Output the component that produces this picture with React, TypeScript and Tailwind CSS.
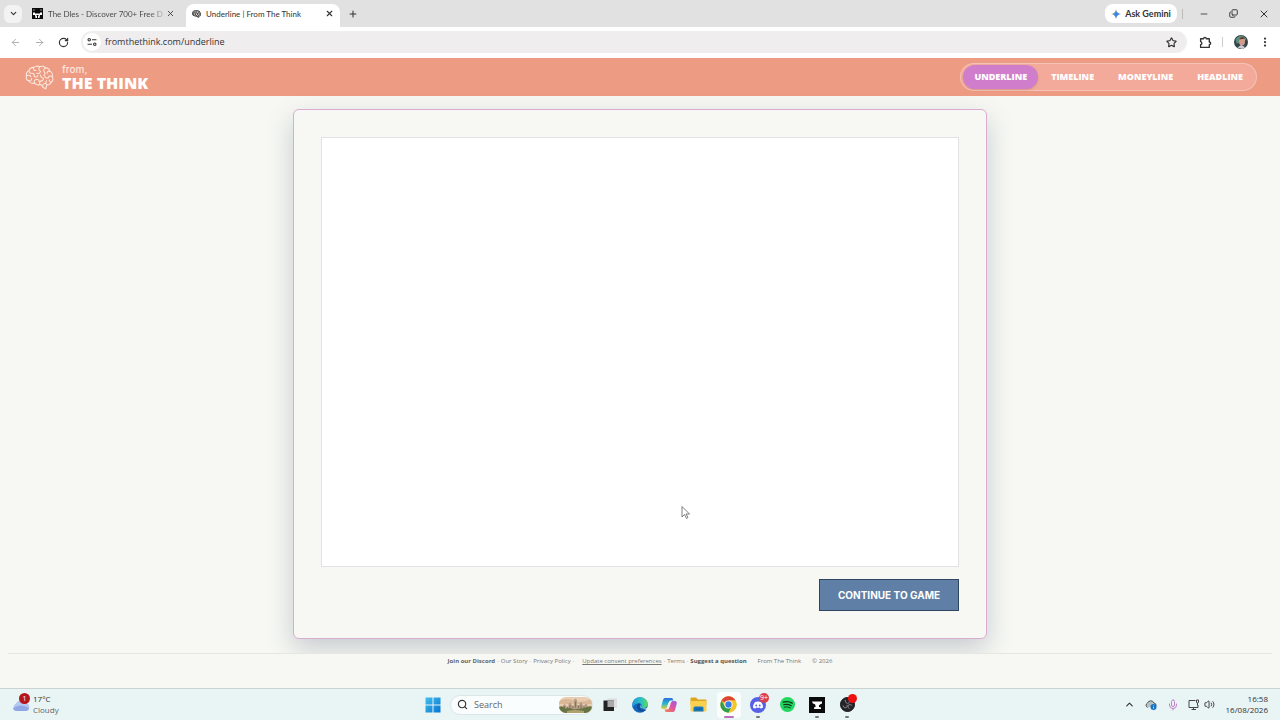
import type { ReactNode } from "react";
import {
  ArrowLeft,
  ArrowRight,
  ChevronDown,
  ChevronUp,
  Copy,
  EllipsisVertical,
  Mic,
  Minus,
  Plus,
  RotateCw,
  Search,
  Star,
  Volume2,
  X,
} from "lucide-react";

const navItems = ["UNDERLINE", "TIMELINE", "MONEYLINE", "HEADLINE"];

function BrainIcon({ className, strokeWidth = 1.1 }: { className?: string; strokeWidth?: number }) {
  return (
    <svg
      viewBox="0 0 30 26"
      className={className}
      fill="none"
      stroke="currentColor"
      strokeWidth={strokeWidth}
      strokeLinecap="round"
      strokeLinejoin="round"
    >
      <path d="M4 16.5C1.5 16 .6 13.500 1.500 11.500C.6 9 2 6.500 4 6C4.500 3.500 7 2 9 2.600C10.500 .8 13.500 .8 15 2.200C17 .8 20 1.200 21.200 3C23.500 2.800 25.500 4.500 25.700 6.500C28 7.500 29 10 28.200 12C29.600 14 29 17 27 18C26.500 20 24.500 21 22.700 20.500L21.500 24.800L18.800 23.500C18.500 21.500 17 20.500 15.500 20.200C13.500 21 11 20.500 10 18.800C7.500 19.500 5 18.500 4 16.500Z" />
      <path d="M4 6C4 8 5.500 9 7.200 8.500M9 2.600C8.200 4.600 9.500 6 11.200 5.600M1.500 11.500C3 10 5.500 10.500 6 12.200M4 16.500C5.500 16.800 7 15.500 6.800 14M10 18.800C9 17.200 9.500 15.500 11.200 15M7.200 8.500C9 8.500 10 10 9.500 11.800C11 13 13 12.500 13.400 10.800M15 2.200C13.800 3.800 14.200 5.800 16 6.500C15.800 8.500 14 9.300 12.300 8.500M21.200 3C19.500 3.500 18.800 5.500 19.800 7C21.300 8 21 10 19.500 10.700M25.700 6.500C24 6 22.800 7 23 8.600M28.200 12C26.500 10.800 24.300 11.500 24 13.400C22.400 14 20.700 13.200 20.500 11.600M27 18C25.800 17.800 25 16.800 25.300 15.500M22.700 20.500C21.300 19.500 21.200 17.500 22.400 16.500M15.500 20.200C14.500 18.500 15.400 16.500 17.200 16.500C18.800 16.300 19.400 14.800 18.800 13.500M11.200 15C13 14.500 14.500 15.500 14.600 16.800M16.200 10.500C16 12 16.800 13.300 18.800 13.500M18.300 21C19 19.500 20.200 19.200 21.300 19.300" />
    </svg>
  );
}

function DlesIcon() {
  return (
    <svg viewBox="0 0 22 22" className="size-[11px] shrink-0">
      <rect width="22" height="22" fill="#0b0b0b" />
      <path d="M3 2l3 2-3 2zM19 2l-3 2 3 2z" fill="#bbb" />
      <path d="M2 9h4v2h10V9h4v5h-4l-1 6H7l-1-6H2z" fill="#fff" />
      <path d="M9 14h4v2h-1v4h-2v-4H9z" fill="#0b0b0b" />
    </svg>
  );
}

function TuneIcon() {
  return (
    <svg viewBox="0 0 18 18" className="size-[10px]" fill="none" stroke="#333" strokeWidth="2">
      <circle cx="4" cy="5" r="2.200" />
      <path d="M9 5h8M1 13h8" />
      <circle cx="14" cy="13" r="2.200" />
    </svg>
  );
}

function ExtensionIcon() {
  return (
    <svg viewBox="0 0 24 24" className="size-[13px]" fill="none" stroke="currentColor" strokeWidth="2.500" strokeLinejoin="round">
      <path d="M3 5h5.500a2.500 2.500 0 0 1 5 0H19v6a2.500 2.500 0 0 1 0 5v5H3v-5a2.800 2.800 0 0 0 0-5.500z" />
    </svg>
  );
}

function TabStrip() {
  return (
    <div className="flex h-[27px] items-center bg-[#e1e1e1] pl-1 font-[Lato,sans-serif] text-[#333]">
      <button type="button" aria-label="Search tabs" className="flex size-[18px] items-center justify-center rounded-md bg-[#f3f3f3]">
        <ChevronDown className="size-[9px]" strokeWidth={3} />
      </button>
      <div className="ml-[10px] flex w-[154px] items-center text-[8px] text-[#444]">
        <DlesIcon />
        <span className="ml-[5px] flex-1 bg-linear-to-r from-[#444] from-85% to-[#ccc] bg-clip-text whitespace-nowrap text-transparent">
          The Dles - Discover 700+ Free D
        </span>
        <button type="button" aria-label="Close The Dles tab" className="mr-[11px]">
          <X className="size-[9px]" strokeWidth={2.500} />
        </button>
      </div>
      <div className="flex w-[154px] items-center self-stretch pt-1 text-[8px]">
        <div className="flex w-full items-center self-stretch rounded-t-lg bg-white px-[6px] pb-[4px]">
          <BrainIcon className="h-2 w-[9px] text-[#333]" strokeWidth={3} />
          <span className="ml-[5px] flex-1 whitespace-nowrap">Underline | From The Think</span>
          <button type="button" aria-label="Close Underline tab">
            <X className="size-[9px]" strokeWidth={3} />
          </button>
        </div>
      </div>
      <button type="button" aria-label="New tab" className="ml-2">
        <Plus className="size-[10px]" strokeWidth={2.500} />
      </button>
      <div className="ml-auto flex items-center">
        <button type="button" className="flex h-[19px] w-[72px] items-center justify-center gap-1 rounded-lg bg-white font-bold">
          <svg viewBox="0 0 20 20" className="size-[10px]">
            <defs>
              <linearGradient id="gemini" x1="0" y1="0" x2="1" y2="1">
                <stop offset="0.250" stopColor="#e8b33c" />
                <stop offset="0.450" stopColor="#3b86e8" />
                <stop offset="0.900" stopColor="#3a7be0" />
              </linearGradient>
            </defs>
            <path d="M10 0C11 6 14 9 20 10C14 11 11 14 10 20C9 14 6 11 0 10C6 9 9 6 10 0Z" fill="url(#gemini)" />
          </svg>
          <span>Ask Gemini</span>
        </button>
        <span className="ml-[5px] h-[10px] w-px bg-[#bbb]" />
        <button type="button" aria-label="Minimize" className="ml-4">
          <Minus className="size-[10px]" />
        </button>
        <button type="button" aria-label="Restore" className="ml-5">
          <Copy className="size-[9px] -scale-y-100" strokeWidth={2.500} />
        </button>
        <button type="button" aria-label="Close window" className="mr-[10px] ml-5">
          <X className="size-[12px]" />
        </button>
      </div>
    </div>
  );
}

function Toolbar() {
  return (
    <div className="flex h-[31px] items-center bg-white pr-[9px] pb-px pl-[10px] text-[#333]">
      <button type="button" aria-label="Back" className="text-[#aaa]">
        <ArrowLeft className="size-[11px]" />
      </button>
      <button type="button" aria-label="Forward" className="ml-[13px] text-[#aaa]">
        <ArrowRight className="size-[11px]" />
      </button>
      <button type="button" aria-label="Reload" className="ml-[13px]">
        <RotateCw className="size-[11px]" strokeWidth={2.500} />
      </button>
      <div className="ml-3 flex h-[22px] flex-1 items-center rounded-full bg-[#efedee] pr-[10px] pl-[2px]">
        <button type="button" aria-label="Site information" className="flex size-[18px] items-center justify-center rounded-full bg-white">
          <TuneIcon />
        </button>
        <input
          aria-label="Address"
          defaultValue="fromthethink.com/underline"
          className="ml-1 flex-1 bg-transparent text-[9px] text-[#333] outline-none"
        />
        <button type="button" aria-label="Bookmark this page">
          <Star className="size-[11px]" strokeWidth={2.500} />
        </button>
      </div>
      <button type="button" aria-label="Extensions" className="ml-3">
        <ExtensionIcon />
      </button>
      <span className="ml-[10px] h-[10px] w-px bg-[#ccc]" />
      <button type="button" aria-label="Profile" className="ml-[11px]">
        <svg viewBox="0 0 28 28" className="size-[14px]">
          <circle cx="14" cy="14" r="14" fill="#33434a" />
          <path d="M3 8Q14-6 25 8L19 15 5 17z" fill="#5e8a7c" />
          <ellipse cx="16" cy="13" rx="6" ry="8" fill="#d59a88" />
          <path d="M7 25L14 20l8 4-5 4z" fill="#c8ccd0" />
          <path d="M10 9Q15 0 22 7L17 8z" fill="#573832" />
        </svg>
      </button>
      <button type="button" aria-label="Menu" className="ml-[11px]">
        <EllipsisVertical className="size-[12px]" strokeWidth={2.500} />
      </button>
    </div>
  );
}

function SiteHeader() {
  return (
    <header className="flex h-[38px] items-center justify-between bg-[#ed9b82] pr-[23px] pl-[25px] text-white">
      <a href="#home" className="flex items-center gap-2">
        <BrainIcon className="h-[25px] w-[29px] text-[#fce9df]" />
        <span className="flex flex-col">
          <span className="font-[Inter,sans-serif] text-[10px] leading-[12px] font-medium text-[#fde6dc]">from,</span>
          <span className="text-[16px] leading-[16px] font-extrabold">THE THINK</span>
        </span>
      </a>
      <nav className="flex h-7 items-center gap-[2px] rounded-full border border-white/30 bg-[#f3aa9a] px-[2px]">
        {navItems.map((item, i) => (
          <a
            key={item}
            href={`#${item.toLowerCase()}`}
            className={`flex h-6 items-center rounded-full px-[11px] text-[9px] font-extrabold ${
              i === 0 ? "bg-[#d07ecb] shadow-sm" : ""
            }`}
          >
            {item}
          </a>
        ))}
      </nav>
    </header>
  );
}

function GameCard() {
  return (
    <main className="flex flex-1 px-4 pt-[13px] pb-[14px]">
      <div className="mx-auto flex w-full max-w-[694px] flex-col rounded-md border border-[#dbacd2] bg-[#f7f8f3] p-[27px] shadow-[0_10px_26px_rgba(70,85,110,0.27)]">
        <div className="min-h-[200px] flex-1 border border-[#e2e2e4] bg-white" />
        <button
          type="button"
          className="mt-3 h-8 w-[140px] self-end border border-[#2f4560] bg-[#5f7fa6] font-[Inter,sans-serif] text-[10px] font-bold text-white"
        >
          CONTINUE TO GAME
        </button>
      </div>
    </main>
  );
}

function SiteFooter() {
  return (
    <footer className="bg-[#f7f8f3] px-2">
      <div className="flex h-[35px] items-start justify-center border-t border-[#e6e7e3] pt-[2px] text-[6px] leading-[10px] whitespace-nowrap text-[#777]">
        <a href="#discord" className="font-bold text-[#666]">Join our Discord</a>
        <span className="px-[2px]">·</span>
        <a href="#story">Our Story</a>
        <span className="px-[2px]">·</span>
        <a href="#privacy">Privacy Policy</a>
        <span className="pr-2 pl-[2px]">·</span>
        <button type="button" className="underline">Update consent preferences</button>
        <span className="px-[2px]">·</span>
        <a href="#terms">Terms</a>
        <span className="px-[2px]">·</span>
        <a href="#suggest" className="font-bold text-[#555]">Suggest a question</a>
        <span className="ml-[11px]">From The Think</span>
        <span className="ml-[11px]">© 2026</span>
      </div>
    </footer>
  );
}

function TaskButton({ label, running, active, children }: { label: string; running?: boolean; active?: boolean; children: ReactNode }) {
  return (
    <button
      type="button"
      aria-label={label}
      className={`relative flex h-[26px] w-6 items-center justify-center rounded-sm ${active ? "bg-white/80" : ""}`}
    >
      {children}
      {running && (
        <span className={`absolute bottom-0 h-[2px] rounded-full ${active ? "w-[10px] bg-[#c06fbd]" : "w-[4px] bg-[#777]"}`} />
      )}
    </button>
  );
}

function TaskbarApps() {
  return (
    <div className="flex w-[261px] justify-between">
      <TaskButton label="Task view">
        <svg viewBox="0 0 28 28" className="size-[14px]">
          <rect x="9" y="1" width="19" height="19" fill="#dedede" />
          <rect x="1" y="5" width="21" height="21" fill="#222" />
          <rect x="9" y="5" width="13" height="13" fill="#aaa" />
        </svg>
      </TaskButton>
      <TaskButton label="Edge">
        <svg viewBox="0 0 32 32" className="size-4">
          <defs>
            <linearGradient id="edgeTop" x1="0" x2="1">
              <stop offset="0" stopColor="#2297dc" />
              <stop offset="0.600" stopColor="#2ac4bf" />
              <stop offset="1" stopColor="#66d951" />
            </linearGradient>
          </defs>
          <circle cx="16" cy="16" r="15.500" fill="#1466b8" />
          <path d="M.6 15C1.500 6 8 .5 16 .5c9 0 15.500 6 15.500 13 0 6-4 9-9 9-4 0-5-1.500-4-3 2-3 0-7-5-7S3 16 .6 22z" fill="url(#edgeTop)" />
          <path d="M13 13c-5 4-4 13 4 15.500 5 1.500 10-1 12-4-7 3-14 0-14-5 0-3 1-4 2-5q-2-2-4-1.500z" fill="#0e4c9b" />
          <path d="M18 16c-2 2-2 5 2 7 4 1.500 8 0 12-2v3c-3 1.500-9 1-12-1-2-1.500-3-4-2-7z" fill="#e9f4f5" />
        </svg>
      </TaskButton>
      <TaskButton label="Copilot">
        <svg viewBox="0 0 32 32" className="size-4">
          <defs>
            <linearGradient id="copA" x1="0" y1="0" x2="0" y2="1">
              <stop offset="0" stopColor="#2a6fe0" />
              <stop offset="0.500" stopColor="#28b5cf" />
              <stop offset="1" stopColor="#e7cf36" />
            </linearGradient>
            <linearGradient id="copB" x1="1" y1="0" x2="0" y2="1">
              <stop offset="0" stopColor="#9a5be8" />
              <stop offset="0.500" stopColor="#e2569c" />
              <stop offset="1" stopColor="#f28b45" />
            </linearGradient>
          </defs>
          <path d="M9 2h12c3 0 3 3 4 5h-5c-3 0-4 2-5 5l-3 9c-1 2-2 3-4 3H4c-4 0-4-4-3-7l3-11c1-3 2-4 5-4z" fill="url(#copA)" />
          <path d="M23 30H11c-3 0-3-3-4-5h5c3 0 4-2 5-5l3-9c1-2 2-3 4-3h4c4 0 4 4 3 7l-3 11c-1 3-2 4-5 4z" fill="url(#copB)" />
          <path d="M14.500 12H18l-2.500 9H12z" fill="#e9f4f5" />
        </svg>
      </TaskButton>
      <TaskButton label="File Explorer">
        <svg viewBox="0 0 34 30" className="h-[15px] w-[17px]">
          <path d="M1 3q0-2 2-2h9l4 4h15q2 0 2 2v8H1z" fill="#dfa51f" />
          <rect x="1" y="8" width="32" height="21" rx="2" fill="#fad04f" />
          <path d="M7 29v-7q0-3 3-3h14q3 0 3 3v7z" fill="#1878bd" />
          <path d="M11 24h12" stroke="#0d5a98" strokeWidth="2" />
        </svg>
      </TaskButton>
      <TaskButton label="Chrome" running active>
        <svg viewBox="0 0 48 48" className="size-[17px]">
          <circle cx="24" cy="24" r="23" fill="#f6c52c" />
          <path d="M24 24L4.100 12.500A23 23 0 0 1 43.900 12.500H24z" fill="#dd4437" />
          <path d="M4.100 12.500A23 23 0 0 0 24 47L34 29.800 24 24 14 29.800z" fill="#2f9e4f" />
          <path d="M24 13h19.900A23 23 0 0 1 24 47l10-17.200z" fill="#f6c52c" />
          <circle cx="24" cy="24" r="11.500" fill="#fff" />
          <circle cx="24" cy="24" r="9" fill="#3b7de8" />
        </svg>
      </TaskButton>
      <TaskButton label="Discord" running>
        <svg viewBox="0 0 32 32" className="size-4">
          <circle cx="16" cy="16" r="16" fill="#5661e8" />
          <path d="M10 10q6-2 12 0 4 5 4 11-2 2-5 2l-1-2q-4 1-8 0l-1 2q-3 0-5-2 0-6 4-11z" fill="#fff" />
          <circle cx="12.500" cy="17" r="2" fill="#5661e8" />
          <circle cx="19.500" cy="17" r="2" fill="#5661e8" />
        </svg>
        <span className="absolute top-px right-px flex size-[10px] items-center justify-center rounded-full bg-[#d8404c] text-[7px] leading-none text-white">
          9+
        </span>
      </TaskButton>
      <TaskButton label="Spotify">
        <svg viewBox="0 0 32 32" className="size-[15px]" fill="none" stroke="#103018" strokeLinecap="round">
          <circle cx="16" cy="16" r="16" fill="#22d760" stroke="none" />
          <path d="M7 11q10-3 19 2" strokeWidth="3" />
          <path d="M8 16.500q8-2 16 2" strokeWidth="2.500" />
          <path d="M9 21.500q7-2 13 1.500" strokeWidth="2" />
        </svg>
      </TaskButton>
      <TaskButton label="Anvil" running>
        <svg viewBox="0 0 32 32" className="size-4">
          <rect width="32" height="32" fill="#0b0b0b" />
          <path d="M6 9h20v4q-4 1-6 4v3l4 1v3H10v-3l3-1v-3q0-2-2-3-4 0-5-5z" fill="#fff" />
        </svg>
      </TaskButton>
      <TaskButton label="OBS" running>
        <svg viewBox="0 0 32 32" className="size-[15px]">
          <circle cx="16" cy="16" r="15" fill="#24242a" stroke="#111" strokeWidth="2" />
          <path d="M11 6q-1 6 5 8 4-1 5-6M26 18q-5-4-9 0-1 4 3 7M6 18q2 6 7 5 4-3 2-6" fill="none" stroke="#85858c" strokeWidth="2" />
        </svg>
        <span className="absolute top-[2px] right-[2px] size-[9px] rounded-full bg-[#ee1010]" />
      </TaskButton>
    </div>
  );
}

function Taskbar() {
  return (
    <div className="flex h-8 items-center border-t border-[#c9d3d2] bg-[#e9f4f5] px-3 text-[#333]">
      <div className="flex flex-1 items-center">
        <button type="button" className="flex items-center gap-[3px] text-left text-[8px] leading-[11px]">
          <span className="relative">
            <svg viewBox="0 0 36 32" className="h-4 w-[18px]">
              <path d="M9 28a8 8 0 0 1-1-15 10 10 0 0 1 18-1 8 8 0 0 1 1 16z" fill="#b4c8f2" />
              <path d="M2 22q16-10 32 0-1 6-7 6H9q-6 0-7-6z" fill="#8fa7e3" />
            </svg>
            <span className="absolute -top-[4px] right-0 flex size-[11px] items-center justify-center rounded-full bg-[#b5161c] text-[7px] leading-none text-white">
              1
            </span>
          </span>
          <span className="flex flex-col pb-px">
            <span>17°C</span>
            <span className="text-[#666]">Cloudy</span>
          </span>
        </button>
      </div>
      <div className="flex items-center gap-[5px]">
        <TaskButton label="Start">
          <svg viewBox="0 0 32 32" className="size-4">
            <defs>
              <linearGradient id="win" x1="0" y1="0" x2="1" y2="1">
                <stop offset="0" stopColor="#42c0ee" />
                <stop offset="1" stopColor="#0874cf" />
              </linearGradient>
            </defs>
            <path d="M1 1h14v14H1zM17 1h14v14H17zM1 17h14v14H1zM17 17h14v14H17z" fill="url(#win)" />
          </svg>
        </TaskButton>
        <label className="flex h-5 w-[143px] items-center rounded-full border border-[#dde6e7] bg-[#fafdfd] pl-[6px]">
          <Search className="size-[11px] shrink-0" strokeWidth={2.500} />
          <input
            aria-label="Search"
            placeholder="Search"
            className="ml-[6px] w-full min-w-0 bg-transparent text-[9px] outline-none placeholder:text-[#666]"
          />
          <svg viewBox="0 0 66 32" className="h-4 w-[33px] shrink-0">
            <defs>
              <clipPath id="castle">
                <rect width="66" height="32" rx="14" />
              </clipPath>
            </defs>
            <g clipPath="url(#castle)">
              <rect width="66" height="32" fill="#e9cdb0" />
              <path d="M0 7q16-6 30 0t36-3v10H0z" fill="#d9b797" />
              <path d="M8 26V17l3-3 3 3v2h5v-5l3-3 3 3v3h5V6l3-3 3 3v10h5v-3l3-3 3 3v4h4v-1l3-3 3 3v10z" fill="#b39b82" />
              <path d="M11 18v5M17 20v3M22 16v6M28 19v3M33 9v12M39 18v4M44 16v6M50 19v4" stroke="#75675a" strokeWidth="1.500" />
              <path d="M0 20q7-4 12 3l9-1 10 3 12-2 8-1q8-5 15-3v13H0z" fill="#667443" />
              <path d="M16 28q16-4 34 0v4H16z" fill="#b0a070" />
            </g>
          </svg>
        </label>
        <TaskbarApps />
      </div>
      <div className="flex flex-1 items-center justify-end">
        <button type="button" aria-label="Show hidden icons">
          <ChevronUp className="size-[11px]" strokeWidth={2.500} />
        </button>
        <button type="button" aria-label="OneDrive" className="ml-[10px]">
          <svg viewBox="0 0 24 20" className="h-[10px] w-3">
            <path d="M5 15a5 5 0 0 1 0-9 7 7 0 0 1 13 0 5 5 0 0 1 4 6" fill="#b7c2c6" stroke="#555" strokeWidth="2" />
            <circle cx="17" cy="14" r="6" fill="#1675c4" />
            <path d="M17 11v1M17 13.500V17" stroke="#fff" strokeWidth="1.500" />
          </svg>
        </button>
        <button type="button" aria-label="Microphone" className="ml-[10px] text-[#c183c6]">
          <Mic className="size-[12px]" />
        </button>
        <button type="button" aria-label="Network" className="ml-[9px]">
          <svg viewBox="0 0 24 24" className="size-[12px]" fill="none" stroke="#444" strokeWidth="2">
            <path d="M15 3H2v14h18v-5M7 21h9M11 17v4" />
            <path d="M17 2v4q0 2 2 2t2-2V2zM19 8v5" />
          </svg>
        </button>
        <button type="button" aria-label="Volume" className="ml-1">
          <Volume2 className="size-[11px]" />
        </button>
        <div className="ml-[11px] pb-px text-right text-[8px] leading-[11px]">
          <div>16:58</div>
          <div>16/08/2026</div>
        </div>
      </div>
    </div>
  );
}

export default function App() {
  return (
    <div className="relative flex min-h-screen flex-col bg-[#f7f8f3] font-['Open_Sans','Noto_Sans',sans-serif] text-[9px]">
      <TabStrip />
      <Toolbar />
      <SiteHeader />
      <GameCard />
      <SiteFooter />
      <Taskbar />
      {/* mouse pointer */}
      <svg viewBox="0 0 18 28" className="pointer-events-none absolute top-[506px] left-[681px] h-[14px] w-[9px]">
        <path d="M2 1v21l5-5 4 8 3-2-4-7h7z" fill="#fff" stroke="#555" strokeWidth="1.500" />
      </svg>
    </div>
  );
}
